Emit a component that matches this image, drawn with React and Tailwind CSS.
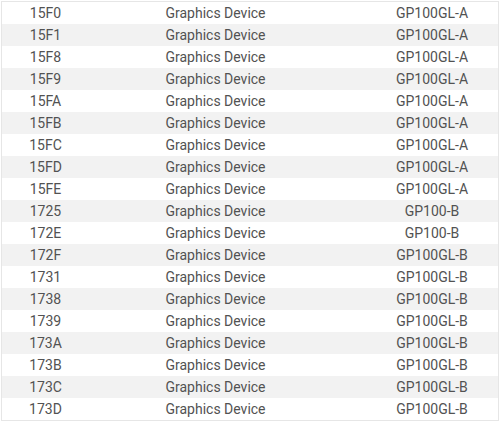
const rows = [
  ["15F0", "Graphics Device", "GP100GL-A"],
  ["15F1", "Graphics Device", "GP100GL-A"],
  ["15F8", "Graphics Device", "GP100GL-A"],
  ["15F9", "Graphics Device", "GP100GL-A"],
  ["15FA", "Graphics Device", "GP100GL-A"],
  ["15FB", "Graphics Device", "GP100GL-A"],
  ["15FC", "Graphics Device", "GP100GL-A"],
  ["15FD", "Graphics Device", "GP100GL-A"],
  ["15FE", "Graphics Device", "GP100GL-A"],
  ["1725", "Graphics Device", "GP100-B"],
  ["172E", "Graphics Device", "GP100-B"],
  ["172F", "Graphics Device", "GP100GL-B"],
  ["1731", "Graphics Device", "GP100GL-B"],
  ["1738", "Graphics Device", "GP100GL-B"],
  ["1739", "Graphics Device", "GP100GL-B"],
  ["173A", "Graphics Device", "GP100GL-B"],
  ["173B", "Graphics Device", "GP100GL-B"],
  ["173C", "Graphics Device", "GP100GL-B"],
  ["173D", "Graphics Device", "GP100GL-B"],
];

export default function App() {
  return (
    <div className="w-[500px] h-[422px] bg-white p-px" style={{ fontFamily: "Roboto, 'Liberation Sans', sans-serif" }}>
      <div className="border border-[#e6e6e6] text-[14px] leading-[22px] text-[#525252]">
        {rows.map((r, i) => (
          <div
            key={r[0]}
            className={`grid grid-cols-[87px_253px_1fr] h-[22px] ${i % 2 === 1 ? "bg-[#f2f2f2]" : "bg-white"}`}
          >
            <div className="text-center">{r[0]}</div>
            <div className="text-center">{r[1]}</div>
            <div className="text-center pl-[24px]">{r[2]}</div>
          </div>
        ))}
      </div>
    </div>
  );
}
